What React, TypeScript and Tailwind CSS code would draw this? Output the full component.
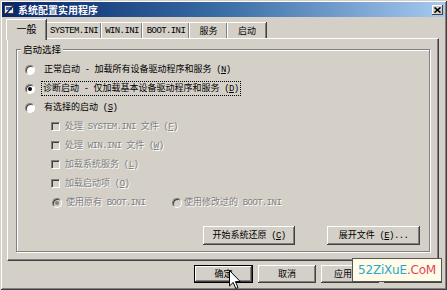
import type { ReactNode } from "react";

// Mixed CJK / Latin label. Latin runs use a narrow mono face like SimSun's
// half-width glyphs; "&x" marks the underlined access key.
function Label({ text }: { text: string }) {
  const parts: { s: string; ascii: boolean; u: boolean }[] = [];
  for (let i = 0; i < text.length; i++) {
    let ch = text[i];
    let u = false;
    if (ch === "&") {
      u = true;
      ch = text[++i];
    }
    const ascii = ch.charCodeAt(0) < 128;
    const last = parts[parts.length - 1];
    if (last && last.ascii === ascii && !u && !last.u) last.s += ch;
    else parts.push({ s: ch, ascii, u });
  }
  return (
    <>
      {parts.map((p, i) => (
        <span
          key={i}
          className={`whitespace-pre ${
            p.ascii ? "font-['Liberation_Mono',monospace] text-[9px] tracking-[-0.6px]" : ""
          } ${p.u ? "underline underline-offset-1" : ""}`}
        >
          {p.s}
        </span>
      ))}
    </>
  );
}

const disabledText = "text-[#808080] [text-shadow:1px_1px_0_#fff]";

function Radio({ checked, disabled }: { checked?: boolean; disabled?: boolean }) {
  return (
    <span
      className={`flex h-[10px] w-[10px] shrink-0 items-center justify-center rounded-full border border-t-[#808080] border-l-[#808080] border-b-white border-r-white shadow-[inset_1px_1px_0_#404040] ${
        disabled ? "bg-[#d4d0c8]" : "bg-white"
      }`}
    >
      {checked && (
        <span className={`h-[4px] w-[4px] rounded-full ${disabled ? "bg-[#808080]" : "bg-black"}`} />
      )}
    </span>
  );
}

function Check() {
  return (
    <span className="h-[9px] w-[9px] shrink-0 border border-t-[#808080] border-l-[#808080] border-b-white border-r-white bg-[#d4d0c8] shadow-[inset_1px_1px_0_#404040]" />
  );
}

function Button({
  children,
  w,
  isDefault,
  textClass = "",
}: {
  children?: ReactNode;
  w: string;
  isDefault?: boolean;
  textClass?: string;
}) {
  return (
    <div
      className={`${w} flex h-full items-center justify-center bg-[#d4d0c8] shadow-[inset_-1px_-1px_0_#404040,inset_1px_1px_0_#fff,inset_-2px_-2px_0_#808080] ${
        isDefault ? "border border-black" : ""
      }`}
    >
      <span className={textClass}>{children}</span>
    </div>
  );
}

const tabs = [
  { label: "SYSTEM.INI", w: "w-[55px]" },
  { label: "WIN.INI", w: "w-[41px]" },
  { label: "BOOT.INI", w: "w-[47px]" },
  { label: "服务", w: "w-[38px]" },
  { label: "启动", w: "w-[39px]" },
];

export default function App() {
  return (
    <div className="relative flex h-[290px] w-[447px] flex-col overflow-hidden bg-[#d4d0c8] p-[2px] font-['Noto_Sans_CJK_SC',sans-serif] text-[9px] leading-[12px] text-black shadow-[inset_1px_1px_0_#d4d0c8,inset_-1px_-1px_0_#404040,inset_2px_2px_0_#fff,inset_-2px_-2px_0_#808080]">
      {/* Title bar */}
      <div className="flex h-[15px] shrink-0 items-center bg-linear-to-r from-[#0a246a] via-[#3a6ea5] to-[#a6caf0] px-[2px]">
        <svg width="11" height="11" viewBox="0 0 11 11" className="mr-[3px] shrink-0">
          <rect x="0.5" y="1.5" width="9" height="8" fill="#e8e8e8" stroke="#404040" />
          <rect x="2" y="3" width="6" height="3" fill="#3a6ea5" />
          <path d="M2 10 L9 2" stroke="#1a1a60" strokeWidth="1.5" />
        </svg>
        <span className="text-[10px] font-bold leading-none text-white">系统配置实用程序</span>
        <div className="ml-auto flex h-[10px] w-[11px] items-center justify-center bg-[#d4d0c8] shadow-[inset_-1px_-1px_0_#404040,inset_1px_1px_0_#fff]">
          <svg width="7" height="6" viewBox="0 0 7 6">
            <path d="M0.5 0.5 L6.5 5.5 M6.5 0.5 L0.5 5.5" stroke="#000" strokeWidth="1.6" />
          </svg>
        </div>
      </div>

      {/* Tabs */}
      <div className="flex h-[21px] shrink-0 items-end pl-[4px]">
        <div className="relative z-10 -mb-[2px] flex h-[21px] w-[40px] items-start justify-center border-l border-t border-white bg-[#d4d0c8] pt-[3px] text-[10px] shadow-[inset_-1px_0_0_#808080,1px_0_0_#404040]">
          一般
        </div>
        {tabs.map((t) => (
          <div
            key={t.label}
            className={`${t.w} flex h-[16px] items-center justify-center border-l border-t border-white shadow-[inset_-1px_0_0_#808080,1px_0_0_#404040]`}
          >
            <Label text={t.label} />
          </div>
        ))}
      </div>

      {/* Tab panel */}
      <div className="ml-[5px] mr-[6px] h-[223px] shrink-0 border border-t-white border-l-white border-r-[#404040] border-b-[#404040] pl-[8px] pt-[10px] shadow-[inset_-1px_-1px_0_#808080]">
        <div className="relative flex h-[203px] w-[414px] flex-col border border-[#808080] pt-[10px] shadow-[1px_1px_0_#fff,inset_1px_1px_0_#fff]">
          <span className="absolute -top-[7px] left-[4px] bg-[#d4d0c8] px-[2px] text-[9.5px]">启动选择</span>

          <div className="flex h-[19px] items-center pl-[8px]">
            <Radio />
            <span className="ml-[7px] border border-transparent px-[1px]">
              <Label text="正常启动 - 加载所有设备驱动程序和服务 (&N)" />
            </span>
          </div>
          <div className="flex h-[19px] items-center pl-[8px]">
            <Radio checked />
            <span className="ml-[6px] border border-dotted border-black px-[1px]">
              <Label text="诊断启动 - 仅加载基本设备驱动程序和服务 (&D)" />
            </span>
          </div>
          <div className="flex h-[19px] items-center pl-[8px]">
            <Radio />
            <span className="ml-[7px] border border-transparent px-[1px]">
              <Label text="有选择的启动 (&S)" />
            </span>
          </div>

          {[
            "处理 SYSTEM.INI 文件 (&F)",
            "处理 WIN.INI 文件 (&W)",
            "加载系统服务 (&L)",
            "加载启动项 (&O)",
          ].map((t) => (
            <div key={t} className="flex h-[19px] items-center pl-[34px]">
              <Check />
              <span className={`ml-[5px] ${disabledText}`}>
                <Label text={t} />
              </span>
            </div>
          ))}
          <div className="flex h-[19px] items-center pl-[35px]">
            <div className="flex w-[120px] items-center">
              <Radio checked disabled />
              <span className={`ml-[4px] ${disabledText}`}>
                <Label text="使用原有 BOOT.INI" />
              </span>
            </div>
            <Radio disabled />
            <span className={`ml-[2px] ${disabledText}`}>
              <Label text="使用修改过的 BOOT.INI" />
            </span>
          </div>

          <div className="mt-[14px] flex h-[19px] justify-end gap-[32px] pr-[9px]">
            <Button w="w-[92px]">
              <Label text="开始系统还原 (&C)" />
            </Button>
            <Button w="w-[93px]">
              <Label text="展开文件 (&E)..." />
            </Button>
          </div>
        </div>
      </div>

      {/* Dialog buttons (the last one sits under the watermark) */}
      <div className="mt-[4px] flex h-[18px] shrink-0 justify-end gap-[5px] pr-[3px]">
        <Button w="w-[59px]" isDefault>
          确定
        </Button>
        <Button w="w-[58px]">取消</Button>
        <Button w="w-[58px]" textClass="mr-[14px]">
          应用
        </Button>
        <Button w="w-[58px]" />
      </div>

      {/* Watermark */}
      <div className="absolute left-[352px] top-[258px] flex h-[24px] w-[90px] items-center justify-center border border-[#555] bg-[#fffbe6] font-['DejaVu_Sans',sans-serif] text-[12px] leading-none tracking-[-0.2px]">
        <span className="text-[#2aa6d2]">52ZiXuE</span>
        <span className="text-[#e0445e]">.CoM</span>
      </div>

      {/* Mouse cursor */}
      <svg width="12" height="20" viewBox="0 0 12 20" className="absolute left-[229px] top-[270px]">
        <path
          d="M0.5 0.5 L0.5 16 L4.2 12.4 L6.8 18.5 L9 17.6 L6.5 11.6 L11.3 11.6 Z"
          fill="#fff"
          stroke="#000"
        />
      </svg>
    </div>
  );
}
